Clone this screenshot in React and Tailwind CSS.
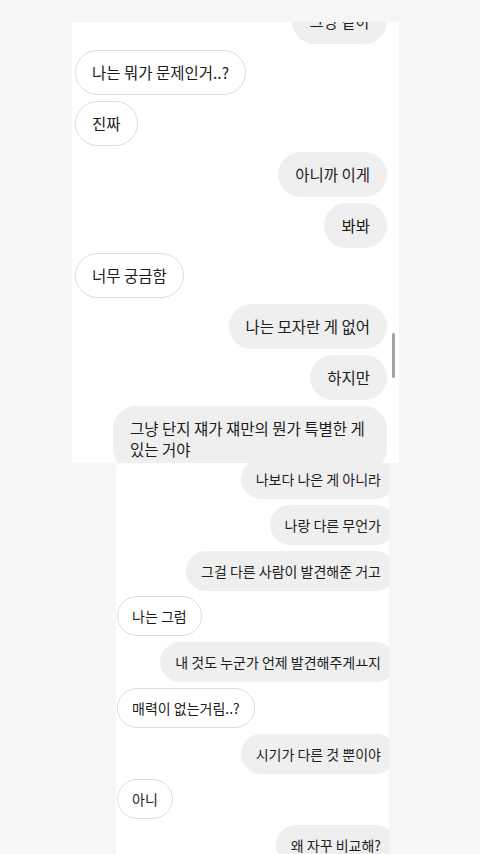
import React from "react";

const font = { fontFamily: '"Noto Sans CJK KR", "Noto Sans", sans-serif' };

function InTop({ children }) {
  return (
    <div className="flex justify-start">
      <div className="rounded-full border border-[#dcdcdc] bg-white px-[16px] py-[11px] text-[15.5px] leading-[21px] text-[#1c1c1c] whitespace-nowrap">
        {children}
      </div>
    </div>
  );
}

function OutTop({ children, className = "" }) {
  return (
    <div className="flex justify-end">
      <div className={"rounded-[23px] border border-[#efefef] bg-[#efefef] px-[16px] py-[11px] text-[15.5px] leading-[21px] text-[#1c1c1c] " + className}>
        {children}
      </div>
    </div>
  );
}

function InBot({ children }) {
  return (
    <div className="flex justify-start">
      <div className="rounded-full border border-[#dcdcdc] bg-white px-[14px] py-[9px] text-[14px] leading-[20px] text-[#1c1c1c] whitespace-nowrap">
        {children}
      </div>
    </div>
  );
}

function OutBot({ children }) {
  return (
    <div className="flex justify-end">
      <div className="rounded-full border border-[#efefef] bg-[#efefef] px-[14px] py-[9px] text-[14px] leading-[20px] text-[#1c1c1c] whitespace-nowrap">
        {children}
      </div>
    </div>
  );
}

export default function App() {
  return (
    <div className="w-[480px] h-[854px] bg-[#f6f6f6] overflow-hidden flex flex-col" style={font}>
      <div className="h-[22px] shrink-0" />
      {/* top screenshot */}
      <div className="ml-[72px] w-[327px] h-[441px] shrink-0 bg-white overflow-hidden relative">
        <div className="mt-[-23px] pl-[3px] pr-[12px] flex flex-col gap-[5.9px]">
          <OutTop className="whitespace-nowrap">그냥 같아</OutTop>
          <InTop>나는 뭐가 문제인거..?</InTop>
          <InTop>진짜</InTop>
          <OutTop className="whitespace-nowrap">아니까 이게</OutTop>
          <OutTop className="whitespace-nowrap">봐봐</OutTop>
          <InTop>너무 궁금함</InTop>
          <OutTop className="whitespace-nowrap">나는 모자란 게 없어</OutTop>
          <OutTop className="whitespace-nowrap">하지만</OutTop>
          <OutTop className="w-[274px] whitespace-nowrap">
            그냥 단지 쟤가 쟤만의 뭔가 특별한 게
            <br />
            있는 거야
          </OutTop>
        </div>
        <div className="absolute left-[320px] top-[311px] w-[3px] h-[45px] rounded-full bg-[#a3a3a3]" />
      </div>
      {/* bottom screenshot */}
      <div className="ml-[116px] w-[273px] flex-1 bg-white overflow-hidden rounded-tl-[6px]">
        <div className="mt-[-4px] w-[290px] pl-[1px] pr-[10px] flex flex-col gap-[5.75px]">
          <OutBot>나보다 나은 게 아니라</OutBot>
          <OutBot>나랑 다른 무언가</OutBot>
          <OutBot>그걸 다른 사람이 발견해준 거고</OutBot>
          <InBot>나는 그럼</InBot>
          <OutBot>내 것도 누군가 언제 발견해주게ㅛ지</OutBot>
          <InBot>매력이 없는거림..?</InBot>
          <OutBot>시기가 다른 것 뿐이야</OutBot>
          <InBot>아니</InBot>
          <OutBot>왜 자꾸 비교해?</OutBot>
        </div>
      </div>
    </div>
  );
}
